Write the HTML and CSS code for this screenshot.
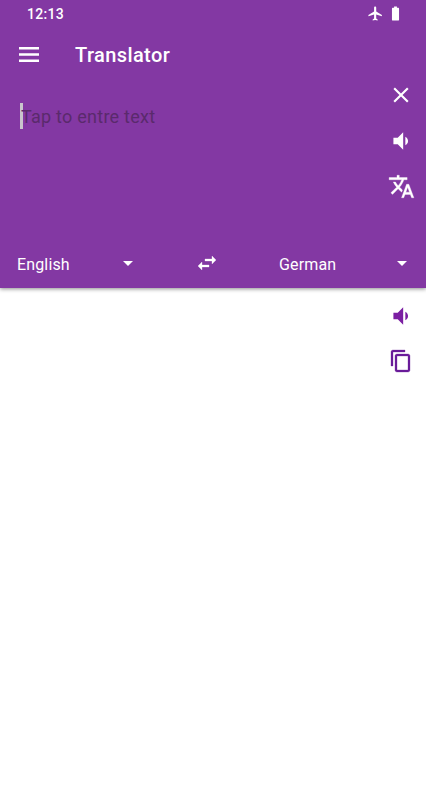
FILE: index.html
```html
<!DOCTYPE html>
<html lang="en">
<head>
  <meta charset="UTF-8" />
  <meta name="viewport" content="width=device-width, initial-scale=1.0"/>
  <title>Translator</title>
  <link rel="stylesheet" href="styles.css">
</head>
<body>
  <div class="top">
    <div class="status">
      <span class="time">12:13</span>
      <div class="status-icons">
        <svg class="status-icon" viewBox="0 0 24 24"><path d="M21 16v-2l-8-5V3.500c0-.83-.67-1.500-1.500-1.500S10 2.670 10 3.500V9l-8 5v2l8-2.500V19l-2 1.500V22l3.500-1 3.500 1v-1.500L13 19v-5.500l8 2.500z"/></svg>
        <svg class="status-icon" viewBox="0 0 24 24"><path d="M15.670 4H14V2h-4v2H8.330C7.600 4 7 4.600 7 5.330v15.330C7 21.400 7.600 22 8.330 22h7.330c.74 0 1.340-.6 1.340-1.330V5.330C17 4.600 16.400 4 15.670 4z"/></svg>
      </div>
    </div>

    <header class="toolbar">
      <svg class="menu" viewBox="0 0 20 15"><path d="M0 0h20v2.400H0zM0 6.300h20v2.400H0zM0 12.600h20V15H0z"/></svg>
      <h1>Translator</h1>
    </header>

    <div class="input-row">
      <div class="input"><span class="caret"></span><span class="placeholder">Tap to entre text</span></div>
      <div class="actions">
        <svg class="icon close" viewBox="0 0 24 24"><path d="M19 6.410L17.590 5 12 10.590 6.410 5 5 6.410 10.590 12 5 17.590 6.410 19 12 13.410 17.590 19 19 17.590 13.410 12z"/></svg>
        <svg class="icon" viewBox="0 0 24 24"><path d="M18.500 12c0-1.770-1.020-3.290-2.500-4.030v8.050c1.480-.73 2.500-2.250 2.500-4.020zM5 9v6h4l5 5V4L9 9H5z"/></svg>
        <svg class="icon large" viewBox="0 0 24 24"><path d="M12.870 15.070l-2.540-2.510.03-.03c1.740-1.940 2.980-4.170 3.710-6.530H17V4h-7V2H8v2H1v1.990h11.170C11.500 7.920 10.440 9.750 9 11.350 8.070 10.320 7.300 9.190 6.690 8h-2c.73 1.630 1.730 3.170 2.980 4.560l-5.090 5.020L4 19l5-5 3.110 3.110.76-2.040zM18.500 10h-2L12 22h2l1.120-3h4.750L21 22h2l-4.500-12zm-2.620 7l1.620-4.330L19.120 17h-3.240z"/></svg>
      </div>
    </div>

    <div class="lang-row">
      <div class="spinner"><span>English</span><i class="arrow"></i></div>
      <svg class="swap" viewBox="0 0 24 24"><path d="M6.990 11L3 15l3.990 4v-3H14v-2H6.990v-3zM21 9l-3.990-4v3H10v2h7.010v3L21 9z"/></svg>
      <div class="spinner"><span>German</span><i class="arrow"></i></div>
    </div>
  </div>

  <div class="output">
    <svg class="icon speak" viewBox="0 0 24 24"><path d="M18.500 12c0-1.770-1.020-3.290-2.500-4.030v8.050c1.480-.73 2.500-2.250 2.500-4.020zM5 9v6h4l5 5V4L9 9H5z"/></svg>
    <svg class="icon copy" viewBox="0 0 24 24"><path d="M16 1H4c-1.100 0-2 .9-2 2v14h2V3h12V1zm3 4H8c-1.100 0-2 .9-2 2v14c0 1.100.9 2 2 2h11c1.100 0 2-.9 2-2V7c0-1.100-.9-2-2-2zm0 16H8V7h11v14z"/></svg>
  </div>
</body>
</html>
```

FILE: styles.css
```css
* {
  box-sizing: border-box;
}

body {
  margin: 0;
  height: 800px;
  overflow: hidden;
  font-family: Roboto, sans-serif;
  background: #fff;
}

.top {
  height: 288px;
  background: #8338a3;
  color: #fff;
  box-shadow: 0 1px 4px rgba(0, 0, 0, 0.45);
  display: flex;
  flex-direction: column;
}

.status {
  height: 27px;
  padding: 0 22px 0 27px;
  display: flex;
  align-items: center;
  justify-content: space-between;
}

.time {
  font-size: 14px;
  font-weight: 500;
  letter-spacing: 0.3px;
}

.status-icons {
  display: flex;
  gap: 3px;
}

.status-icon {
  width: 17px;
  height: 17px;
  fill: #fff;
}

.toolbar {
  height: 55px;
  padding-left: 19px;
  display: flex;
  align-items: center;
}

.toolbar h1 {
  margin: 0 0 0 36px;
  font-size: 20px;
  font-weight: 500;
  letter-spacing: 0.4px;
}

.menu {
  width: 20px;
  height: 15px;
  fill: #fff;
  margin-top: -1px;
}

.input-row {
  flex: 1;
  display: flex;
  justify-content: space-between;
  padding-right: 12px;
}

.input {
  padding-left: 20px;
  display: flex;
  align-items: center;
  height: 68px;
}

.caret {
  width: 2.5px;
  height: 26px;
  background: #c9c5cc;
}

.placeholder {
  font-size: 18px;
  letter-spacing: 0.25px;
  color: #5a2a6c;
  margin-left: -1.5px;
  margin-top: 1px;
}

.actions {
  display: flex;
  flex-direction: column;
  align-items: center;
  gap: 20px;
  width: 26px;
}

.icon {
  width: 26px;
  height: 26px;
  fill: #fff;
  flex: none;
}

.icon.large {
  width: 27px;
  height: 27px;
  margin-top: -1px;
  stroke: #fff;
  stroke-width: 0.3;
}

.lang-row {
  height: 48px;
  padding: 0 19px 0 17px;
  display: grid;
  grid-template-columns: 116px 1fr 128px;
  align-items: center;
}

.spinner {
  display: flex;
  align-items: center;
  justify-content: space-between;
  font-size: 16px;
  letter-spacing: 0.15px;
}

.arrow {
  width: 0;
  height: 0;
  border-left: 5.5px solid transparent;
  border-right: 5.5px solid transparent;
  border-top: 5.5px solid #fff;
  margin-top: -1px;
}

.swap {
  width: 24px;
  height: 24px;
  fill: #fff;
  stroke: #fff;
  stroke-width: 0.3;
  justify-self: center;
  margin: -2px 0 0 2px;
}

.output {
  display: flex;
  flex-direction: column;
  align-items: flex-end;
  gap: 20px;
  padding: 15px 12px 0 0;
}

.speak {
  fill: #7b1fa2;
}

.copy {
  width: 24px;
  height: 24px;
  fill: #6a1b9a;
  stroke: #6a1b9a;
  stroke-width: 0.3;
  margin-right: 1px;
}
```
